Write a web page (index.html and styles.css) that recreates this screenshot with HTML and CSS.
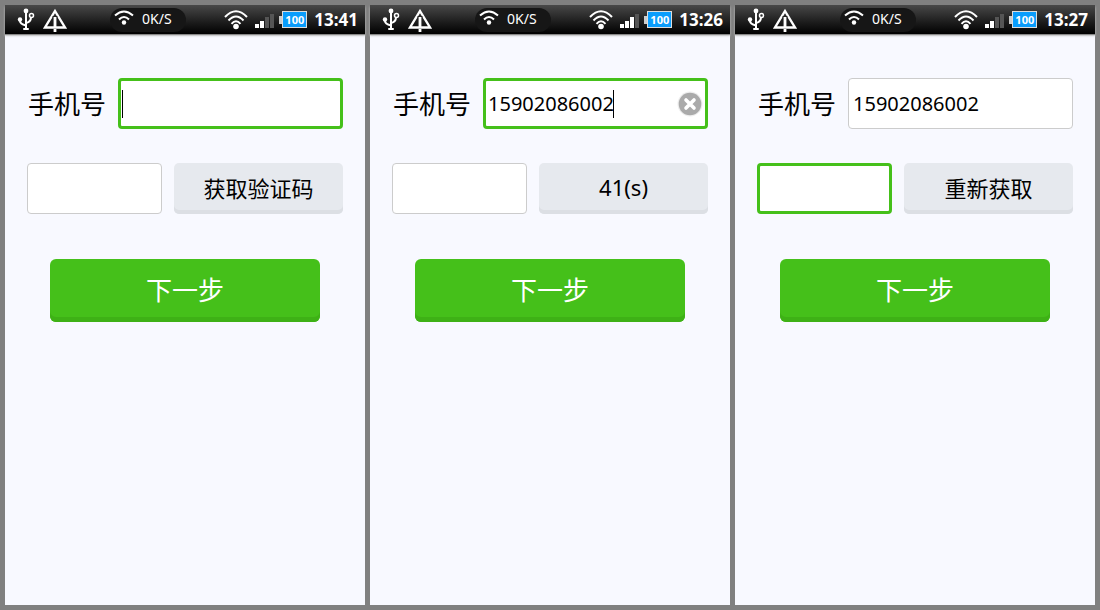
FILE: index.html
```html
<!DOCTYPE html>
<html lang="zh-CN">
<head>
    <meta charset="UTF-8">
    <meta name="viewport" content="width=device-width, initial-scale=1.0">
    <title>手机号验证</title>
    <link rel="stylesheet" href="styles.css">
</head>
<body>
    <!-- Shared icons -->
    <svg class="sprite" aria-hidden="true">
        <symbol id="icon-usb" viewBox="0 0 18 24">
            <g fill="none" stroke="#fff" stroke-width="2">
                <path d="M9 4V21M3 12V13Q3 16 9 17.500M9 15Q14 14 14 9"/>
                <circle cx="14.500" cy="7.500" r="2" stroke-width="1.500"/>
            </g>
            <g fill="#fff">
                <circle cx="9" cy="3" r="2.400"/>
                <circle cx="3" cy="11.500" r="2.200"/>
                <rect x="6" y="20" width="6" height="2" rx="1"/>
            </g>
        </symbol>
        <symbol id="icon-debug" viewBox="0 0 24 24">
            <path d="M12 3L22 19.500H2Z" fill="none" stroke="#fff" stroke-width="2.400"/>
            <path d="M12 8V18" stroke="#222" stroke-width="5"/>
            <path d="M12 9V19M12 21V24" stroke="#fff" stroke-width="2.800"/>
        </symbol>
        <symbol id="icon-wifi-small" viewBox="0 0 20 16">
            <g fill="none" stroke="#fff" stroke-width="2">
                <path d="M1 5.500Q10 -2.500 19 5.500M5 9.500Q10 4.500 15 9.500"/>
            </g>
            <circle cx="10" cy="12.500" r="2.200" fill="#fff"/>
        </symbol>
        <symbol id="icon-wifi" viewBox="0 0 24 20">
            <g fill="none" stroke="#fff" stroke-width="2">
                <path d="M1 7Q12 -4.500 23 7M4.500 10.500Q12 2.500 19.500 10.500M7.500 13.800Q12 8.800 16.500 13.800"/>
            </g>
            <circle cx="12" cy="16.500" r="2.800" fill="#fff"/>
        </symbol>
        <symbol id="icon-clear" viewBox="0 0 26 26">
            <circle cx="13" cy="13" r="12.500" fill="#eee"/>
            <circle cx="13" cy="13" r="11.300" fill="#aaa"/>
            <path d="M9 9L17 17M17 9L9 17" stroke="#fff" stroke-width="3.600" stroke-linecap="round"/>
        </symbol>
    </svg>

    <!-- Initial state -->
    <section class="screen">
        <header class="status-bar">
            <svg class="usb"><use href="#icon-usb"/></svg>
            <svg class="debug"><use href="#icon-debug"/></svg>
            <div class="speed">
                <svg class="wifi-small"><use href="#icon-wifi-small"/></svg>
                <span>0K/S</span>
            </div>
            <div class="status-right">
                <svg class="wifi"><use href="#icon-wifi"/></svg>
                <div class="signal"><i class="on"></i><i class="on"></i><i></i><i></i></div>
                <div class="battery">100</div>
                <time class="clock">13:41</time>
            </div>
        </header>
        <form class="form">
            <div class="row">
                <label class="label" for="phone-1">手机号</label>
                <div class="field">
                    <input class="input focused" id="phone-1" type="tel">
                    <span class="caret"></span>
                </div>
            </div>
            <div class="row code-row">
                <input class="input" type="text" aria-label="验证码">
                <button class="code-button" type="button">获取验证码</button>
            </div>
            <button class="next-button" type="button">下一步</button>
        </form>
    </section>

    <!-- Countdown -->
    <section class="screen">
        <header class="status-bar">
            <svg class="usb"><use href="#icon-usb"/></svg>
            <svg class="debug"><use href="#icon-debug"/></svg>
            <div class="speed">
                <svg class="wifi-small"><use href="#icon-wifi-small"/></svg>
                <span>0K/S</span>
            </div>
            <div class="status-right">
                <svg class="wifi"><use href="#icon-wifi"/></svg>
                <div class="signal"><i class="on"></i><i class="on"></i><i class="on"></i><i></i></div>
                <div class="battery">100</div>
                <time class="clock">13:26</time>
            </div>
        </header>
        <form class="form">
            <div class="row">
                <label class="label" for="phone-2">手机号</label>
                <div class="field">
                    <input class="input focused" id="phone-2" type="tel" value="15902086002">
                    <span class="caret caret-end"></span>
                    <button class="clear" type="button" aria-label="清除"><svg><use href="#icon-clear"/></svg></button>
                </div>
            </div>
            <div class="row code-row">
                <input class="input" type="text" aria-label="验证码">
                <button class="code-button" type="button">41(s)</button>
            </div>
            <button class="next-button" type="button">下一步</button>
        </form>
    </section>

    <!-- Request again -->
    <section class="screen">
        <header class="status-bar">
            <svg class="usb"><use href="#icon-usb"/></svg>
            <svg class="debug"><use href="#icon-debug"/></svg>
            <div class="speed">
                <svg class="wifi-small"><use href="#icon-wifi-small"/></svg>
                <span>0K/S</span>
            </div>
            <div class="status-right">
                <svg class="wifi"><use href="#icon-wifi"/></svg>
                <div class="signal"><i class="on"></i><i class="on"></i><i></i><i></i></div>
                <div class="battery">100</div>
                <time class="clock">13:27</time>
            </div>
        </header>
        <form class="form">
            <div class="row">
                <label class="label" for="phone-3">手机号</label>
                <div class="field">
                    <input class="input" id="phone-3" type="tel" value="15902086002">
                </div>
            </div>
            <div class="row code-row">
                <input class="input focused" type="text" aria-label="验证码">
                <button class="code-button" type="button">重新获取</button>
            </div>
            <button class="next-button" type="button">下一步</button>
        </form>
    </section>
</body>
</html>
```

FILE: styles.css
```css
/* Basic styling */
* {
    margin: 0;
    padding: 0;
    box-sizing: border-box;
    font-family: 'Noto Sans', 'Noto Sans CJK SC', sans-serif;
}

body {
    display: flex;
    gap: 5px;
    min-height: 100vh;
    padding: 5px;
    background-color: #808080;
    color: #000;
}

.sprite {
    position: absolute;
    width: 0;
    height: 0;
}

.screen {
    flex: 1;
    min-width: 0;
    background-color: #f8f9ff;
}

/* Status bar */
.status-bar {
    display: flex;
    align-items: center;
    height: 29px;
    padding: 0 7px 0 12px;
    background: linear-gradient(#484848, #1c1c1c 60%, #000);
    box-shadow: 0 1px 1px #888, 0 2px 2px #ccc;
    color: #fff;
}

.usb {
    width: 18px;
    height: 24px;
}

.debug {
    width: 24px;
    height: 24px;
    margin-left: 8px;
}

.speed {
    display: flex;
    align-items: center;
    gap: 8px;
    height: 24px;
    margin-left: 43px;
    padding: 0 14px 0 4px;
    border-radius: 12px;
    background-color: #161616;
    font-size: 14px;
    line-height: 20px;
}

.speed span {
    padding-bottom: 2px;
}

.wifi-small {
    width: 20px;
    height: 16px;
    margin-bottom: 3px;
}

.status-right {
    display: flex;
    align-items: center;
    margin-left: auto;
}

.wifi {
    width: 24px;
    height: 20px;
}

.signal {
    display: flex;
    align-items: flex-end;
    gap: 1px;
    height: 17px;
    margin: 0 5px 0 7px;
}

.signal i {
    width: 4px;
    height: 14px;
    background-color: #555;
}

.signal i.on {
    background-color: #fff;
}

.signal i:nth-child(1) {
    height: 4px;
}

.signal i:nth-child(2) {
    height: 7px;
}

.signal i:nth-child(3) {
    height: 11px;
}

.battery {
    position: relative;
    width: 25px;
    height: 17px;
    margin-left: 3px;
    border: 1px solid #ddd;
    background-color: #0a9dfc;
    font-size: 11px;
    font-weight: bold;
    line-height: 15px;
    text-align: center;
}

/* Battery terminal */
.battery::before {
    content: '';
    position: absolute;
    top: 4px;
    left: -4px;
    width: 3px;
    height: 8px;
    background-color: #ccc;
}

.clock {
    margin-left: 7px;
    font-size: 17px;
    font-weight: bold;
}

/* Form */
.form {
    display: flex;
    flex-direction: column;
    gap: 34px;
    padding: 44px 22px;
}

.row {
    display: flex;
    align-items: center;
    gap: 12px;
}

.code-row {
    display: grid;
    grid-template-columns: 4fr 5fr;
}

.label {
    padding-left: 1px;
    font-size: 26px;
    line-height: 36px;
    white-space: nowrap;
}

.field {
    position: relative;
    flex: 1;
    min-width: 0;
}

.input {
    display: block;
    width: 100%;
    min-width: 0;
    height: 51px;
    padding: 0 4px;
    border: 1px solid #ccc;
    border-radius: 4px;
    outline: none;
    background-color: #fff;
    color: #000;
    font-size: 20px;
}

.input.focused {
    padding: 0 2px;
    border: 3px solid #45c01a;
}

.caret {
    position: absolute;
    top: 12px;
    left: 4px;
    width: 1px;
    height: 28px;
    background-color: #000;
}

.caret-end {
    left: 130px;
}

.clear {
    position: absolute;
    top: 13px;
    right: 5px;
    width: 26px;
    height: 26px;
    border: none;
    background: none;
}

.clear svg {
    display: block;
    width: 26px;
    height: 26px;
}

.code-button {
    min-width: 0;
    height: 51px;
    padding-bottom: 3px;
    border: none;
    border-radius: 5px;
    background-color: #e6e9ee;
    box-shadow: inset 0 -4px #dcdfe4;
    color: #000;
    font-size: 22px;
}

.next-button {
    height: 63px;
    margin: 11px 23px 0;
    padding-bottom: 3px;
    border: none;
    border-radius: 6px;
    background-color: #45c01a;
    box-shadow: inset 0 -5px #3eb116;
    color: #fff;
    font-size: 26px;
}
```
